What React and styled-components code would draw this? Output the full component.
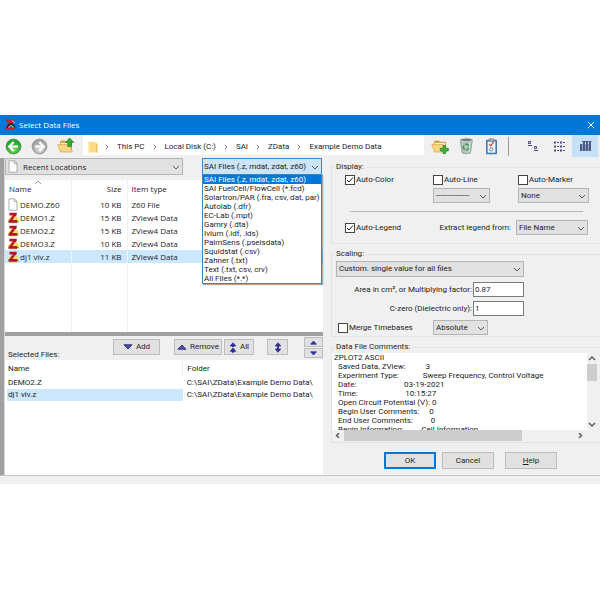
import React from "react";
import styled, { createGlobalStyle, css } from "styled-components";

const ui = '"Open Sans", "Noto Sans", sans-serif';
const dialog = 'Roboto, "Open Sans", sans-serif';

const Global = createGlobalStyle`
  * { box-sizing: border-box; }
  body { margin: 0; background: #fff; color: #1c1c1c; font: 8px/10px ${dialog}; }
  button, input, select, textarea { font: inherit; color: inherit; margin: 0; border-radius: 0; }
`;

const Window = styled.main`
  margin-top: 115px;
  background: #f0f0f0;
`;

const TitleBar = styled.header`
  display: flex;
  align-items: center;
  height: 20px;
  padding: 0 4px 0 5px;
  gap: 3px;
  background: #0078d7;
  color: #fff;
  font-family: ${ui};
`;

const Title = styled.h1`
  flex: 1;
  margin: 0;
  font-size: 8px;
  font-weight: 400;
`;

const IconButton = styled.button`
  display: flex;
  align-items: center;
  justify-content: center;
  flex: none;
  width: ${(p) => p.$w || 26}px;
  height: ${(p) => p.$h || 22}px;
  padding: 0;
  border: 0;
  background: ${(p) => (p.$active ? "#c5e1f8" : "transparent")};
`;

const Toolbar = styled.nav`
  display: flex;
  height: 23px;
  padding-right: 2px;
`;

const Address = styled.div`
  display: flex;
  align-items: center;
  flex: 1;
  height: 20px;
  margin-left: 3px;
  padding: 3px 0 0 5px;
  background: #fff;
`;

const Crumb = styled.a`
  padding: 0 8px;
  color: inherit;
  text-decoration: none;
  white-space: nowrap;
`;

const FolderSlot = styled.span`
  display: flex;
  margin-right: 7px;
`;

const ToolDivider = styled.span`
  width: 1px;
  height: 19px;
  margin: 2px 11px 0 2px;
  background: #999;
`;

const Body = styled.div`
  display: flex;
  height: 318px;
  border-bottom: 1px solid #c4c4c4;
`;

const Gutter = styled.div`
  flex: 0 0 5px;
  border-right: 1px solid #d8d8d8;
  background: #a0a0a0;
`;

const Files = styled.section`
  display: flex;
  flex-direction: column;
  flex: 0 0 53%;
  min-width: 0;
`;

const Filters = styled.div`
  display: flex;
  justify-content: space-between;
  height: 22px;
  padding-right: 1px;
`;

const FilterBox = styled.div`
  position: relative;
  width: 120px;
`;

const PickerWrap = styled.span`
  position: relative;
  display: block;
  flex: none;
  width: ${(p) => p.$w || "100%"};
  height: ${(p) => p.$h || 15}px;
  font-family: ${(p) => (p.$ui ? ui : dialog)};

  > svg { position: absolute; right: 3px; top: calc(50% - 2px); pointer-events: none; }
  > svg.leading { left: 3px; right: auto; top: 2px; }
`;

const Select = styled.select`
  appearance: none;
  display: block;
  width: 100%;
  height: 100%;
  padding: 0 12px 0 ${(p) => p.$pad || 2}px;
  border: 1px solid ${(p) => (p.$open ? "#3c86c4" : "#b4b4b4")};
  background: ${(p) => (p.$open ? "#cce4f7" : "#e1e1e1")};
  overflow: hidden;
`;

const Menu = styled.ul`
  position: absolute;
  z-index: 2;
  top: 16px;
  left: 0;
  width: 120px;
  margin: 0;
  padding: 0;
  border: 1px solid #3c86c4;
  box-shadow: 1px 1px 1px rgba(0, 0, 0, 0.35);
  background: #fff;
  list-style: none;
`;

const MenuItem = styled.li`
  height: 9px;
  padding-left: 1px;
  line-height: 9px;
  white-space: nowrap;
  ${(p) => p.$selected && css`background: #0078d7; color: #fff;`}
`;

const ListPane = styled.div`
  flex: none;
  height: 152px;
  background: #fff;
  font-family: ${ui};
`;

const Table = styled.table`
  width: 100%;
  border-collapse: collapse;
  table-layout: fixed;

  th, td { padding: 0 4px; text-align: left; font-weight: 400; white-space: nowrap; }
`;

const FileTable = styled(Table)`
  height: 100%;

  th, td { border-right: 1px solid #f2f2f2; }
  th { position: relative; height: 18px; }
  th:last-child, td:last-child { border-right: 0; }
  th:nth-child(2), td:nth-child(2) { padding-right: 5px; text-align: right; }
  td { height: 13px; }
  td:first-child { padding-left: 3px; }
  tr:last-child td { height: auto; }
`;

const SortMark = styled.span`
  position: absolute;
  top: 0;
  left: 29px;
  display: flex;
`;

const FileRow = styled.tr`
  background: ${(p) => (p.$selected ? "#cce8ff" : "transparent")};
`;

const FileName = styled.span`
  display: flex;
  align-items: center;
`;

const FileIcon = styled.span`
  display: flex;
  flex: none;
  width: 12px;
`;

const Splitter = styled.div`
  flex: none;
  height: 4px;
  background: #a0a0a0;
`;

const Actions = styled.div`
  display: flex;
  flex: none;
  height: 24px;
  padding: 1px 0 0 3px;
`;

const Caption = styled.h2`
  align-self: flex-end;
  flex: 1;
  margin: 0;
  font-size: 8px;
  font-weight: 400;
`;

const Button = styled.button`
  display: flex;
  align-items: center;
  justify-content: center;
  gap: 3px;
  flex: none;
  width: ${(p) => p.$w}px;
  height: ${(p) => p.$h || 16}px;
  margin-top: ${(p) => p.$top || 0}px;
  margin-right: ${(p) => p.$gap || 0}px;
  padding: 0;
  border: ${(p) => (p.$primary ? "2px solid #0078d7" : "1px solid #bdbdbd")};
  background: #e1e1e1;
`;

const Spinner = styled.div`
  display: grid;
  gap: 1px;
  align-content: start;
`;

const SelectedPane = styled.div`
  flex: 1;
  padding: 0 2px;
  background: #fff;
`;

const SelectedTable = styled(Table)`
  th { height: 17px; }
  td { height: 12px; }
  th, td { padding: 0 1px; }
  th:first-child { border-right: 1px solid #eee; }
  th:last-child, td:last-child { padding-left: 4px; }
`;

const NameCell = styled.td`
  background: ${(p) => (p.$selected ? "#cce8ff" : "transparent")};
`;

const Options = styled.section`
  flex: 1;
  min-width: 0;
  padding: 4px 0 0 8px;
`;

const Group = styled.fieldset`
  min-width: 0;
  height: ${(p) => p.$h}px;
  margin: 0 0 ${(p) => p.$gap}px;
  padding: ${(p) => p.$top}px 0 0;
  border: 1px solid #e2e2e2;
  border-right: 0;

  legend { height: 10px; margin-left: 2px; padding: 0 2px; }
`;

const DisplayGrid = styled.div`
  display: grid;
  grid-template-columns: 88px 85px 1fr;
  row-gap: 3px;
  padding: 0 12px 0 13px;
`;

const Rule = styled.hr`
  height: 1px;
  margin: 8px 17px 8px 18px;
  border: 0;
  background: #b8b8b8;
`;

const Row = styled.div`
  display: flex;
  align-items: center;
  height: ${(p) => p.$h || 15}px;
  margin-bottom: ${(p) => p.$gap || 0}px;
  padding: ${(p) => p.$pad || "0"};
`;

const Spacer = styled.span`
  flex: 1;
`;

const Check = styled.label`
  display: flex;
  align-items: center;
  gap: 1px;
  white-space: nowrap;

  input {
    appearance: none;
    width: 10px;
    height: 10px;
    border: 1px solid #444;
    background: #fff;
  }
`;

const CheckBoxWrap = styled.span`
  position: relative;
  display: flex;

  svg { position: absolute; top: 1px; left: 1px; pointer-events: none; }
`;

const Label = styled.label`
  margin-right: 5px;
  white-space: nowrap;
`;

const FieldRow = styled.div`
  display: grid;
  grid-template-columns: 136px 51px;
  column-gap: 1px;
  align-items: center;
  height: 15px;
  margin: 0 0 4px 4px;

  label { text-align: right; }
`;

const TextInput = styled.input`
  width: 100%;
  height: 15px;
  padding: 0 1px;
  border: 1px solid #7a7a7a;
  background: #fff;
`;

const MergeRow = styled.div`
  display: grid;
  grid-template-columns: 95px 55px;
  align-items: center;
  padding-left: 6px;
`;

const CommentsGrid = styled.div`
  display: grid;
  grid-template-columns: minmax(0, 1fr) 10px;
  grid-template-rows: 77px 11px;
  margin-right: 3px;
`;

const Comments = styled.textarea`
  width: 100%;
  height: 77px;
  padding: 0 2px;
  border: 0;
  outline: 0;
  background: #fff;
  line-height: 9px;
  white-space: pre;
  resize: none;
  overflow: hidden;
`;

const ScrollBar = styled.div`
  display: flex;
  flex-direction: ${(p) => (p.$vertical ? "column" : "row")};
  align-items: center;
  justify-content: space-between;
  padding: ${(p) => (p.$vertical ? "3px 0" : "0 3px 0 2px")};
  background: #f0f0f0;
`;

const Thumb = styled.div`
  background: #cdcdcd;
  ${(p) =>
    p.$vertical
      ? css`width: 10px; height: 17px; margin: 3px 0 auto;`
      : css`height: 11px; width: 71%; margin: 0 auto 0 2px;`}
`;

const Footer = styled.div`
  display: flex;
  padding-left: 53px;
`;

const BottomEdge = styled.div`
  height: 8px;
`;

const Chevron = ({ dir = "down", className, color = "#555", strong }) => {
  const d = { down: "M1 1l3 3 3-3", up: "M1 4l3-3 3 3", right: "M3 0l2.5 2.5L3 5", left: "M5 0L2.5 2.5 5 5" }[dir];
  return (
    <svg className={className} width="8" height="5" viewBox="0 0 8 5" fill="none" stroke={color} strokeWidth={strong ? 1.4 : 1}>
      <path d={d} />
    </svg>
  );
};

const CrumbMark = () => (
  <svg width="4" height="6" viewBox="0 0 4 6" fill="none" stroke="#555" strokeWidth="0.9">
    <path d="M.8 1L2.9 3 .8 5" />
  </svg>
);

const PageIcon = ({ className }) => (
  <svg className={className} width="10" height="13" viewBox="0 0 10 13" fill="#fff" stroke="#9a9a9a" strokeWidth="0.8">
    <path d="M1 .8h5.3L9 3.4v8.8H1z" />
    <path d="M6.2 .8v2.8H9" fill="none" />
  </svg>
);

const ZIcon = () => (
  <svg width="11" height="12" viewBox="0 0 11 12">
    <path d="M1 9l2-5 5 0 2.5 5-2 2.6H2z" fill="#f3e36a" />
    <path d="M1.5 .8h7.2v2.3L4.3 8h4.9v2.8H.6V8.3L5 3.4H1.5z" fill="#b5122b" />
    <path d="M6 5.2C8 4.4 9.6 6 10.4 8.6M.6 8.2L3 5.2" fill="none" stroke="#e8d83c" strokeWidth="1.1" />
    <path d="M.4 10h1.8M8.8 9.2l1.8 .8" stroke="#3f7a36" strokeWidth="1" />
  </svg>
);

const AppIcon = () => (
  <svg width="11" height="12" viewBox="0 0 11 12">
    <path d="M1.5 .8h7.2v2.3L4.3 8h5.5v2.8H.6V8.3L5 3.4H1.5z" fill="#d31a25" />
    <path d="M2 8.8C4 4 7.5 3.4 10 8.4" fill="none" stroke="#151515" strokeWidth="1.2" />
    <path d="M3.6 8.8C5 6 7 5.6 8.4 8.8" fill="none" stroke="#ecd934" strokeWidth="0.9" />
    <path d="M7 1.3L9.7 4" stroke="#eee" strokeWidth="0.8" />
  </svg>
);

const RoundArrow = ({ forward }) => (
  <svg width="17" height="17" viewBox="0 0 17 17">
    <defs>
      <radialGradient id={forward ? "rf" : "rb"} cx="50%" cy="70%">
        <stop offset="0" stopColor={forward ? "#dcdcdc" : "#7ee05a"} />
        <stop offset="1" stopColor={forward ? "#a4a4a4" : "#27a334"} />
      </radialGradient>
    </defs>
    <circle cx="8.5" cy="8.5" r="7.4" fill={`url(#${forward ? "rf" : "rb"})`} stroke={forward ? "#999" : "#4a9a4a"} />
    <path
      d="M8.7 4L4.2 8.5 8.7 13M4.5 8.5h8.6"
      transform={forward ? "rotate(180 8.5 8.5)" : undefined}
      fill="none" stroke="#fff" strokeWidth="2.2"
    />
  </svg>
);

const FolderIcon = ({ mark }) => (
  <svg width="18" height="18" viewBox="0 0 18 18">
    <path d="M3 15V5l1-1.6h4l1 1.4h6V15z" fill="#d9a441" />
    <path d="M4 6h10v6H4z" fill="#fff8dc" />
    <path d="M.8 7.6h11.5L15.4 15H3.6z" fill="#f8d782" stroke="#d3a24b" strokeWidth="0.7" />
    {mark === "up" && <path d="M12.6 1l4.2 4.4h-2.3v4h-3.7v-4H8.5z" fill="#38ab35" stroke="#1d7f25" strokeWidth="0.7" />}
    {mark === "add" && <path d="M12 8.6h2.6v2.7h2.7v2.6h-2.7v2.7H12v-2.7H9.3v-2.6H12z" fill="#45b13a" stroke="#237c24" strokeWidth="0.7" />}
  </svg>
);

const SmallFolder = () => (
  <svg width="10" height="12" viewBox="0 0 10 12">
    <path d="M.5 .8h5.5v.8H9.3v9.8H.5z" fill="#fbdc82" />
    <path d="M8 3.5h1.4v7.9H8z" fill="#e8bf58" />
    <path d="M.5 .8h1.2v10.6H.5z" fill="#ffe9a6" />
  </svg>
);

const TrashIcon = () => (
  <svg width="15" height="18" viewBox="0 0 15 18">
    <path d="M1.2 2.8l2 13.2q4.3 1.6 8.2 0l2-13.2z" fill="#b8c2c4" stroke="#7d898c" strokeWidth="0.7" />
    <ellipse cx="7.4" cy="2.9" rx="6.3" ry="1.8" fill="#75807f" stroke="#d6dddd" strokeWidth="0.9" />
    <circle cx="7.2" cy="10" r="2.9" fill="none" stroke="#36a444" strokeWidth="1.7" strokeDasharray="4.6 1.4" />
    <path d="M11 5.5l-1.2 10" stroke="#e4eaea" />
  </svg>
);

const ClipIcon = () => (
  <svg width="13" height="17" viewBox="0 0 13 17">
    <rect x="1" y="1.8" width="11" height="14.4" rx="1" fill="#3e78b4" />
    <path d="M2.6 3.3h7.8v11.4H2.6z" fill="#f4f7fa" />
    <path d="M4.2 .8h4.6v3H4.2z" fill="#a9afb5" stroke="#67717a" strokeWidth="0.5" />
    <path d="M4.2 6l1.5 1.8L8.8 3.8" fill="none" stroke="#c8432f" strokeWidth="1.1" />
    <circle cx="6.4" cy="11.4" r="1.7" fill="none" stroke="#5b89bb" strokeWidth="1" />
  </svg>
);

const SmallIcons = () => (
  <svg width="12" height="12" viewBox="0 0 12 12" fill="none" stroke="#4a4790" strokeWidth="1">
    <path d="M1.5 1.5h2v2h-2zM1 5.5h4M7.5 6.5h2v2h-2zM7 10.5h4" />
  </svg>
);

const ListIcon = () => (
  <svg width="12" height="11" viewBox="0 0 12 11" fill="none" stroke="#4a4790">
    <path d="M1 1.5h2M1 5.5h2M1 9.5h2M7 1.5h2M7 5.5h2M7 9.5h2" strokeWidth="2" />
    <path d="M4 1.5h2M4 5.5h2M4 9.5h2M10 1.5h2M10 5.5h2M10 9.5h2" strokeWidth="1" />
  </svg>
);

const DetailsIcon = () => (
  <svg width="13" height="12" viewBox="0 0 13 12" fill="none" stroke="#4c5a86">
    <path d="M3 1.5h9.5" strokeWidth="1" />
    <path d="M2 4v7M5 2v9M8 2v9M11 2v9" strokeWidth="2" />
    <path d="M3.5 4v7M6.5 4v7M9.5 4v7" stroke="#8fa0c4" strokeWidth="1" />
  </svg>
);

const Tri = ({ up }) => (
  <svg width="10" height="6" viewBox="0 0 10 6" fill="#5557b0" stroke="#20206e" strokeWidth="0.9">
    <path d={up ? "M1 5.2L5 1l4 4.2z" : "M1 .8h8L5 5z"} />
  </svg>
);

const SmallTri = ({ up }) => (
  <svg width="7" height="5" viewBox="0 0 7 5" fill="#3434a8" stroke="#22227a" strokeWidth="0.7">
    <path d={up ? "M.6 4.2L3.5 1l2.9 3.2z" : "M.6 .8h5.8L3.5 4z"} />
  </svg>
);

const DoubleUp = () => (
  <svg width="8" height="11" viewBox="0 0 8 11" fill="#3434a8" stroke="#22227a" strokeWidth="0.7">
    <path d="M4 .7L6.8 4H1.2zM4 6L6.8 9.3H1.2zM3.5 3.8h1v1h-1zM3 9.4h2v.8H3z" />
  </svg>
);

const UpDown = () => (
  <svg width="8" height="11" viewBox="0 0 8 11" fill="#3434a8" stroke="#22227a" strokeWidth="0.7">
    <path d="M4 .7L6.8 4H1.2zM4 10.3L6.8 7H1.2zM3.5 4h1v3h-1z" />
  </svg>
);

const CheckBox = ({ label, checked }) => (
  <Check>
    <CheckBoxWrap>
      <input type="checkbox" defaultChecked={checked} />
      {checked && (
        <svg width="8" height="8" viewBox="0 0 8 8" fill="none" stroke="#222">
          <path d="M1 4l2 2 4-4.6" />
        </svg>
      )}
    </CheckBoxWrap>
    {label}
  </Check>
);

const Picker = ({ id, label, value, w, h, pad, icon, isUi, open }) => (
  <PickerWrap $w={w} $h={h} $ui={isUi}>
    <Select id={id} aria-label={label} $pad={pad} $open={open}>
      <option>{value}</option>
    </Select>
    {icon}
    <Chevron />
  </PickerWrap>
);

const fileTypes = [
  "SAI Files (.z, mdat, zdat, z60)", "SAI FuelCell/FlowCell (*.fcd)", "Solartron/PAR (.fra, csv, dat, par)",
  "Autolab (.dfr)", "EC-Lab (.mpt)", "Gamry (.dta)", "Ivium (.idf, .ids)", "PalmSens (.pseisdata)",
  "Squidstat (.csv)", "Zahner (.txt)", "Text (.txt, csv, crv)", "All Files (*.*)",
];

const files = [
  ["DEMO.Z60", "10 KB", "Z60 File"],
  ["DEMO1.Z", "15 KB", "ZView4 Data"],
  ["DEMO2.Z", "15 KB", "ZView4 Data"],
  ["DEMO3.Z", "10 KB", "ZView4 Data"],
  ["dj1 viv.z", "11 KB", "ZView4 Data"],
];

const comments = `ZPLOT2 ASCII
  Saved Data, ZView:          3
  Experiment Type:            Sweep Frequency, Control Voltage
  Date:                        03-19-2021
  Time:                        10:15:27
  Open Circuit Potential (V): 0
  Begin User Comments:     0
  End User Comments:         0
  Begin Information:         Cell Information`;

const crumbs = ["This PC", "Local Disk (C:)", "SAI", "ZData", "Example Demo Data"];

export default function App() {
  return (
    <Window>
      <Global />
      <TitleBar>
        <AppIcon />
        <Title>Select Data Files</Title>
        <IconButton $w={10} $h={14} aria-label="Close">
          <svg width="8" height="8" viewBox="0 0 8 8" stroke="#fff"><path d="M.8 .8l6.4 6.4M7.2 .8L.8 7.2" /></svg>
        </IconButton>
      </TitleBar>

      <Toolbar>
        <IconButton aria-label="Back"><RoundArrow /></IconButton>
        <IconButton aria-label="Forward"><RoundArrow forward /></IconButton>
        <IconButton $w={28} aria-label="Up one level"><FolderIcon mark="up" /></IconButton>
        <Address>
          <FolderSlot><SmallFolder /></FolderSlot>
          {crumbs.map((c) => (
            <React.Fragment key={c}>
              <CrumbMark />
              <Crumb href="#">{c}</Crumb>
            </React.Fragment>
          ))}
        </Address>
        <IconButton $w={32} aria-label="New folder"><FolderIcon mark="add" /></IconButton>
        <IconButton $w={20} aria-label="Delete"><TrashIcon /></IconButton>
        <IconButton $w={30} aria-label="Properties"><ClipIcon /></IconButton>
        <ToolDivider />
        <IconButton aria-label="Small icons"><SmallIcons /></IconButton>
        <IconButton aria-label="List"><ListIcon /></IconButton>
        <IconButton $active aria-label="Details"><DetailsIcon /></IconButton>
      </Toolbar>

      <Body>
        <Gutter />
        <Files>
          <Filters>
            <Picker label="Location" value="Recent Locations" w="178px" h={17} pad={17} isUi icon={<PageIcon className="leading" />} />
            <FilterBox>
              <Picker label="File type" value={fileTypes[0]} h={17} pad={1} open />
              <Menu role="listbox" aria-label="File types">
                {fileTypes.map((t, i) => (
                  <MenuItem key={t} role="option" aria-selected={i === 0} $selected={i === 0}>{t}</MenuItem>
                ))}
              </Menu>
            </FilterBox>
          </Filters>
          <ListPane>
            <FileTable>
              <colgroup><col style={{ width: 66 }} /><col style={{ width: 56 }} /><col /></colgroup>
              <thead>
                <tr>
                  <th>Name<SortMark><Chevron dir="up" color="#999" /></SortMark></th>
                  <th>Size</th>
                  <th>Item type</th>
                </tr>
              </thead>
              <tbody>
                {files.map(([name, size, type], i) => (
                  <FileRow key={name} $selected={i === 4}>
                    <td><FileName><FileIcon>{i === 0 ? <PageIcon /> : <ZIcon />}</FileIcon>{name}</FileName></td>
                    <td>{size}</td>
                    <td>{type}</td>
                  </FileRow>
                ))}
                <tr><td /><td /><td /></tr>
              </tbody>
            </FileTable>
          </ListPane>
          <Splitter />
          <Actions>
            <Caption>Selected Files:</Caption>
            <Button $w={47} $top={2} $gap={14}><Tri />Add</Button>
            <Button $w={48} $top={2} $gap={2}><Tri up />Remove</Button>
            <Button $w={30} $top={2} $gap={13}><DoubleUp />All</Button>
            <Button $w={21} $top={2} $gap={16} aria-label="Reverse order"><UpDown /></Button>
            <Spinner>
              <Button $w={19} $h={10} aria-label="Move up"><SmallTri up /></Button>
              <Button $w={19} $h={10} aria-label="Move down"><SmallTri /></Button>
            </Spinner>
          </Actions>
          <SelectedPane>
            <SelectedTable>
              <colgroup><col style={{ width: "56%" }} /><col /></colgroup>
              <thead><tr><th>Name</th><th>Folder</th></tr></thead>
              <tbody>
                <tr><NameCell>DEMO2.Z</NameCell><td>C:\SAI\ZData\Example Demo Data\</td></tr>
                <tr><NameCell $selected>dj1 viv.z</NameCell><td>C:\SAI\ZData\Example Demo Data\</td></tr>
              </tbody>
            </SelectedTable>
          </SelectedPane>
        </Files>

        <Options>
          <Group $h={82} $gap={5} $top={3}>
            <legend>Display:</legend>
            <DisplayGrid>
              <CheckBox label="Auto-Color" checked />
              <CheckBox label="Auto-Line" />
              <CheckBox label="Auto-Marker" />
              <span />
              <Picker label="Line style" value="---------------" w="57px" />
              <Picker label="Marker style" value="None" w="71px" />
            </DisplayGrid>
            <Rule />
            <Row $pad="0 12px 0 13px">
              <CheckBox label="Auto-Legend" checked />
              <Spacer />
              <Label htmlFor="legend">Extract legend from:</Label>
              <Picker id="legend" value="File Name" w="72px" />
            </Row>
          </Group>

          <Group $h={88} $gap={5} $top={2}>
            <legend>Scaling:</legend>
            <Row $h={16} $gap={5} $pad="0 0 0 4px">
              <Picker label="Scaling mode" value="Custom. single value for all files" w="188px" h={16} />
            </Row>
            <FieldRow>
              <label htmlFor="area">Area in cm², or Multiplying factor:</label>
              <TextInput id="area" defaultValue="0.87" />
            </FieldRow>
            <FieldRow>
              <label htmlFor="czero">C-zero (Dielectric only):</label>
              <TextInput id="czero" defaultValue="1" />
            </FieldRow>
            <MergeRow>
              <CheckBox label="Merge Timebases" />
              <Picker label="Timebase mode" value="Absolute" w="55px" />
            </MergeRow>
          </Group>

          <Group $h={101} $gap={9} $top={1}>
            <legend>Data File Comments:</legend>
            <CommentsGrid>
              <Comments readOnly aria-label="Data File Comments" defaultValue={comments} />
              <ScrollBar $vertical>
                <Chevron dir="up" strong /><Thumb $vertical /><Chevron strong />
              </ScrollBar>
              <ScrollBar>
                <Chevron dir="left" strong /><Thumb /><Chevron dir="right" strong />
              </ScrollBar>
            </CommentsGrid>
          </Group>

          <Footer>
            <Button $w={52} $h={17} $gap={6} $primary>OK</Button>
            <Button $w={52} $h={17} $gap={11}>Cancel</Button>
            <Button $w={52} $h={17}><span><u>H</u>elp</span></Button>
          </Footer>
        </Options>
      </Body>
      <BottomEdge />
    </Window>
  );
}
